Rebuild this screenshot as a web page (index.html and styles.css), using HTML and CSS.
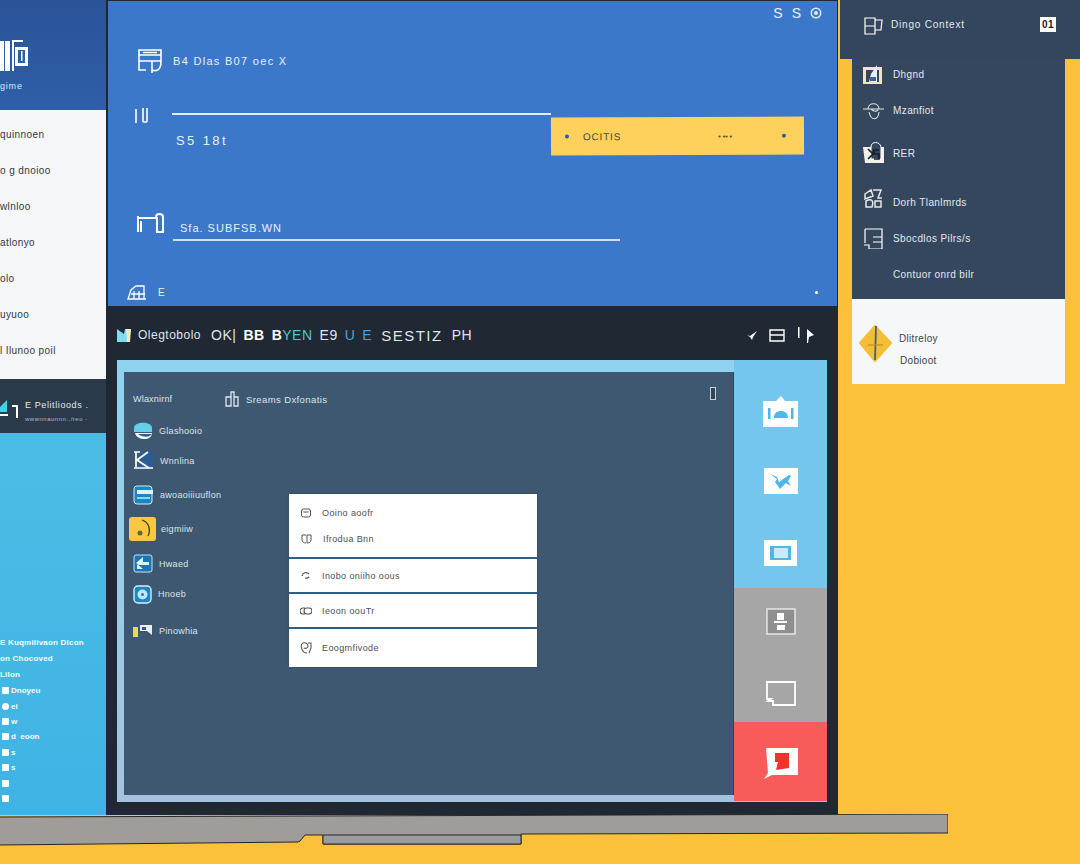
FILE: index.html
```html
<!DOCTYPE html>
<html lang="en">
<head>
    <meta charset="UTF-8">
    <title>Dashboard</title>
    <link rel="stylesheet" href="styles.css">
</head>
<body>

<div class="desk">

    <!-- left column, cut off by the window edge -->
    <aside class="left">
        <div class="left-brand">
            <svg class="brand-icon" width="28" height="32" viewBox="0 0 28 32">
                <rect x="0" y="1" width="10" height="30" fill="#fff"/>
                <rect x="4" y="1" width="1" height="30" fill="#2f5ea5"/>
                <path d="M12 0h11v2H14v29h-2z" fill="#fff"/>
                <rect x="15" y="7" width="13" height="19" fill="#fff"/>
                <rect x="18" y="10" width="7" height="13" fill="#2f5ea5"/>
                <rect x="21" y="11" width="1.500" height="10" fill="#fff"/>
            </svg>
            <div class="brand-name">gime</div>
        </div>
        <ul class="left-list">
            <li>quinnoen</li>
            <li>o g dnoioo</li>
            <li>wlnloo</li>
            <li>atlonyo</li>
            <li>olo</li>
            <li>uyuoo</li>
            <li>l Ilunoo poil</li>
        </ul>
        <div class="left-status">
            <svg width="18" height="19" viewBox="0 0 18 19">
                <path d="M0 8l7-7v12H0z" fill="#3fd0e6"/>
                <path d="M0 15h8v2H0zM12 6h6v13h-2V8h-4z" fill="#fff"/>
            </svg>
            <div>
                <div class="status-title">E Pelitlioods .</div>
                <div class="status-sub">wwwnnaunnn.,/reo -</div>
            </div>
        </div>
        <div class="left-cyan">
            <div class="cyan-line">E Kuqmilivaon Dlcon</div>
            <div class="cyan-line">on Chocoved</div>
            <div class="cyan-line">Lilon</div>
            <div class="cyan-item"><i></i>Dnoyeu</div>
            <div class="cyan-item"><i class="round"></i>ei</div>
            <div class="cyan-item"><i></i>w</div>
            <div class="cyan-item"><i></i>d &nbsp;eoon</div>
            <div class="cyan-item"><i></i>s</div>
            <div class="cyan-item"><i></i>s</div>
            <div class="cyan-item"><i></i></div>
            <div class="cyan-item"><i></i></div>
        </div>
    </aside>

    <main class="center">
        <section class="hero">
            <div class="hero-top">
                <span>S</span><span>S</span>
                <svg width="12" height="12" viewBox="0 0 14 14">
                    <circle cx="7" cy="7" r="5.500" fill="none" stroke="#dbeafa" stroke-width="1.800"/>
                    <circle cx="7" cy="7" r="2.400" fill="#dbeafa"/>
                </svg>
            </div>
            <div class="hero-row first">
                <svg width="25" height="26" viewBox="0 0 25 26" fill="none" stroke="#fff" stroke-width="1.600">
                    <path d="M1 2h22v11H1zM1 7h22M5 4.500h14M1 13v9h7M14 13v12M14 22c6 2 9-1 9-9"/>
                </svg>
                <span class="hero-title">B4 Dlas B07 oec X</span>
            </div>
            <div class="hero-row second">
                <svg class="icon-bars" width="14" height="17" viewBox="0 0 14 17" fill="none" stroke="#fff" stroke-width="1.600">
                    <path d="M1 2v14M8 1v14M12 1v14M8 15h4"/>
                </svg>
                <div class="hero-col">
                    <div class="hero-line"></div>
                    <div class="hero-sub">S5 18t</div>
                </div>
                <div class="yellow-bar">
                    <i></i><span class="yellow-label">OCITIS</span>
                    <span class="yellow-dots">• •• •</span><i></i>
                </div>
            </div>
            <div class="hero-row third">
                <svg width="28" height="20" viewBox="0 0 28 20" fill="none" stroke="#fff" stroke-width="2">
                    <path d="M2 19V3M5 19V8M2 5h19M20 4c0-4 7-4 7 0v15h-6V4"/>
                </svg>
                <div class="hero-field">
                    <div class="hero-field-text">Sfa. SUBFSB.WN</div>
                    <div class="hero-field-line"></div>
                </div>
            </div>
            <div class="hero-foot">
                <svg width="20" height="15" viewBox="0 0 20 15" fill="none" stroke="#fff" stroke-width="1.300">
                    <path d="M1 14L4 5 9 1h8v13zM1 14h18M7 6v8M12 6v8M4 9h14"/>
                </svg>
                <span>E</span>
                <i class="foot-dot"></i>
            </div>
        </section>

        <header class="bar">
            <svg width="14" height="15" viewBox="0 0 14 15">
                <path d="M0 1l7 5 1-5h6l-2 13H0z" fill="#7fdcf0"/>
                <path d="M9 1h5l-1 13h-3z" fill="#f1e9c4"/>
            </svg>
            <span class="bar-small">Olegtobolo</span>
            <div class="bar-big">
                <span>OK|</span>
                <span class="white">BB</span>
                <span><b class="white">B</b><span class="teal">YEN</span></span>
                <span>E9</span>
                <span class="blue">U</span>
                <span class="blue">E</span>
                <span class="wide-word">SESTIZ</span>
                <span>PH</span>
            </div>
            <div class="bar-tools">
                <svg width="10" height="10" viewBox="0 0 10 10"><path d="M0 5l3 1 7-5-4 6-1 3-2-3z" fill="#fff"/></svg>
                <svg width="16" height="13" viewBox="0 0 16 13" fill="none" stroke="#fff" stroke-width="1.400"><path d="M1 1h14v11H1zM1 6h14"/></svg>
                <svg width="18" height="16" viewBox="0 0 18 16"><path d="M1 0h1.500v11H1zM10 2l7 6-5 2-1 6h-1z" fill="#fff"/></svg>
            </div>
        </header>

        <section class="window">
            <div class="window-main">
                <div class="window-head">
                    <span class="head-left">Wlaxnirnf</span>
                    <svg width="14" height="16" viewBox="0 0 14 16" fill="none" stroke="#dfe7ee" stroke-width="1.300"><path d="M1 15V6h5v9zM6 15V1h3v14M9 15V6h4v9z"/></svg>
                    <span class="head-right">Sreams Dxfonatis</span>
                    <i class="head-mark"></i>
                </div>
                <ul class="side">
                    <li>
                        <svg width="20" height="18" viewBox="0 0 20 18"><path d="M1 6c0-7 18-7 18 0v4H1z" fill="#67cdea"/><path d="M2 11h17c0 8-15 8-17 0z" fill="#f2f7fb"/><path d="M5 12h14c-2 3-9 4-14 0z" fill="#2d5f9e"/></svg>
                        <span>Glashooio</span>
                    </li>
                    <li>
                        <svg width="21" height="20" viewBox="0 0 21 20"><rect x="6" y="1" width="14" height="17" fill="#2c5c96"/><path d="M1 1h6M3 1v15M1 17h19M4 9l11-8M4 9l12 8" fill="none" stroke="#fff" stroke-width="1.700"/></svg>
                        <span>Wnnlina</span>
                    </li>
                    <li>
                        <svg width="21" height="20" viewBox="0 0 21 20"><rect x="1" y="1" width="18" height="18" rx="3" fill="#1a86c6" stroke="#d5eef8"/><rect x="4" y="5" width="16" height="4" fill="#d9f3fb"/><rect x="4" y="12" width="13" height="2" fill="#8ed6ef"/></svg>
                        <span>awoaoiiiuuflon</span>
                    </li>
                    <li>
                        <svg class="active-icon" width="27" height="24" viewBox="0 0 27 24"><rect width="27" height="24" rx="3" fill="#fac83f"/><path d="M13 3c7 2 9 10 6 16" fill="none" stroke="#3a3a2c" stroke-width="1.300"/><circle cx="11" cy="16" r="2.500" fill="#5d6a3c"/></svg>
                        <span>eigmiiw</span>
                    </li>
                    <li>
                        <svg width="20" height="19" viewBox="0 0 20 19"><rect x="1" y="1" width="18" height="17" rx="2" fill="#1d74b5" stroke="#bfe6f5"/><path d="M3 9l7-6v5h6v3H4v4h6" fill="#d9f3fb"/></svg>
                        <span>Hwaed</span>
                    </li>
                    <li>
                        <svg width="19" height="19" viewBox="0 0 19 19"><rect x="1" y="1" width="17" height="17" rx="4" fill="#1a86c6" stroke="#d5eef8" stroke-width="1.400"/><circle cx="9.500" cy="9.500" r="5" fill="#bde7f6"/><circle cx="9.500" cy="9.500" r="1.500" fill="#2c7ab8"/></svg>
                        <span>Hnoeb</span>
                    </li>
                    <li>
                        <svg width="20" height="14" viewBox="0 0 20 14"><rect x="0" y="3" width="5" height="10" fill="#dfe53f"/><path d="M7 1h12v10l-5-4H7z" fill="#e3eef5"/><rect x="9" y="3" width="4" height="3" fill="#40586f"/></svg>
                        <span>Pinowhia</span>
                    </li>
                </ul>
                <div class="popup">
                    <div class="popup-group">
                        <div class="popup-row">
                            <svg width="12" height="12" viewBox="0 0 12 12" fill="none" stroke="#555" stroke-width="1"><rect x="1.500" y="2" width="9" height="8" rx="2"/><path d="M3.500 5h5"/></svg>
                            <span>Ooino aoofr</span>
                        </div>
                        <div class="popup-row">
                            <svg width="13" height="12" viewBox="0 0 13 12" fill="none" stroke="#555" stroke-width="1"><path d="M6 2H2v5c0 2 2 3 4 3M7 2h4v5c0 2-2 3-4 3z"/></svg>
                            <span>Ifrodua Bnn</span>
                        </div>
                    </div>
                    <div class="popup-row ruled">
                        <svg width="12" height="12" viewBox="0 0 12 12" fill="none" stroke="#555" stroke-width="1.200"><path d="M2 6a4 4 0 0 1 7-2M9 7a4 4 0 0 1-4 1"/></svg>
                        <span>Inobo oniiho oous</span>
                    </div>
                    <div class="popup-row ruled">
                        <svg width="12" height="12" viewBox="0 0 12 12" fill="none" stroke="#555" stroke-width="1.200"><path d="M5 3H3a2 2 0 0 0 0 6h2M7 3h2a2 2 0 0 1 0 6H7a2 2 0 0 1 0-6z"/></svg>
                        <span>Ieoon oouTr</span>
                    </div>
                    <div class="popup-row ruled last">
                        <svg width="12" height="14" viewBox="0 0 12 14" fill="none" stroke="#555" stroke-width="1.100"><path d="M7 12C1 12 0 3 3 2s5 1 5 3-2 3-4 2M8 2h3v5l-2 5"/></svg>
                        <span>Eoogmfivode</span>
                    </div>
                </div>
            </div>
            <div class="rail">
                <div class="rail-blue">
                    <svg width="35" height="31" viewBox="0 0 35 31"><path d="M0 5h13l5-5 4 5h13v26H0z" fill="#fff"/><path d="M5 12h2.500v11H5zM28 12h2.500v11H28zM11 22c0-5 3-7 7-7s7 2 7 7z" fill="#4fb7e8"/></svg>
                    <svg width="34" height="26" viewBox="0 0 34 26"><rect width="34" height="26" fill="#fff"/><path d="M6 6l7 3 2 5 10-7 2 1-3 5 3 5-5-3-6 6-5-7 2-3z" fill="#4fb7e8"/></svg>
                    <svg width="33" height="26" viewBox="0 0 33 26"><rect width="33" height="26" fill="#fff"/><path d="M6 6h21v14H6z" fill="#4fb7e8"/><rect x="10" y="8" width="14" height="10" fill="#c8eafa"/></svg>
                </div>
                <div class="rail-grey">
                    <svg width="30" height="27" viewBox="0 0 30 27"><rect x="1" y="1" width="28" height="25" fill="#8f8f8f" stroke="#e6e6e6" stroke-width="1.500"/><path d="M11 5h7v7h-7zM8 13h13v2H8zM11 17h8v5h-8z" fill="#fff"/></svg>
                    <svg width="31" height="25" viewBox="0 0 31 25" fill="none" stroke="#fff" stroke-width="1.800"><path d="M2 1h28v23H8v-4H3l3-2H2z"/></svg>
                </div>
                <div class="rail-red">
                    <svg width="35" height="32" viewBox="0 0 35 32"><path d="M3 1h32v27H9L1 32l4-6z" fill="#fff"/><path d="M12 6h14v15l-13 2 2-8h-3z" fill="#f2332b"/></svg>
                </div>
            </div>
        </section>
    </main>

    <aside class="right">
        <div class="right-head">
            <svg width="19" height="20" viewBox="0 0 19 20" fill="none" stroke="#fff" stroke-width="1.200"><path d="M1 3h10v16H1zM1 11h10M11 5h7l-1 10h-6"/></svg>
            <span>Dingo Context</span>
            <b class="badge">01</b>
        </div>
        <ul class="right-list">
            <li>
                <svg width="19" height="19" viewBox="0 0 19 19"><rect y="2" width="19" height="17" fill="#f1e3c4"/><rect x="3" y="5" width="13" height="12" fill="#33465e"/><path d="M8 9l6-9v17H6z" fill="#e8eef8"/><path d="M7 12h6v4H7z" fill="#3e5fa8"/></svg>
                <span>Dhgnd</span>
            </li>
            <li>
                <svg width="22" height="18" viewBox="0 0 22 18" fill="none" stroke="#e5e5e5" stroke-width="1.100"><path d="M0 7h21M5 7c0-7 11-7 11 0M6 10c2 9 9 9 10 0M8 7c3 3 5 3 7 1"/></svg>
                <span>Mzanfiot</span>
            </li>
            <li>
                <svg width="22" height="23" viewBox="0 0 22 23"><path d="M0 5h21v16H2z" fill="#f3f0ec"/><path d="M8 5c0-6 9-6 10 0v12H8z" fill="#33465e" stroke="#fff"/><path d="M5 7l5 5-5 5M16 8h-5v4h5v5h-5" fill="none" stroke="#15202c" stroke-width="1.700"/></svg>
                <span>RER</span>
            </li>
            <li class="low-text">
                <svg width="20" height="21" viewBox="0 0 20 21" fill="none" stroke="#e8e8e8" stroke-width="1.500"><path d="M2 6l6-4 2 6-8 3zM10 2h8l-3 8h4M3 13c6-3 8 0 6 6H3zM12 13h6v6h-6z"/></svg>
                <span>Dorh Tlanlmrds</span>
            </li>
            <li>
                <svg width="20" height="21" viewBox="0 0 20 21" fill="none" stroke="#fff" stroke-width="1.200"><path d="M2 1h17v20H6v-4H1M2 1v14M10 9h9M10 14h9"/></svg>
                <span>Sbocdlos Pilrs/s</span>
            </li>
            <li>
                <i></i>
                <span>Contuor onrd bilr</span>
            </li>
        </ul>
        <div class="right-card">
            <svg width="33" height="37" viewBox="0 0 33 37"><path d="M16 1l16 17-16 18L1 18z" fill="#f6bd36" stroke="#f6bd36" stroke-linejoin="round" stroke-width="2"/><path d="M17 1l-1 34" stroke="#3f5f8f" stroke-width="1.800"/><path d="M9 20h15" stroke="#c08b25" stroke-width="1.200"/></svg>
            <div class="card-text">
                <div>Dlitreloy</div>
                <div class="card-second">Dobioot</div>
            </div>
        </div>
    </aside>
</div>

<svg class="base" width="948" height="50" viewBox="0 0 948 50">
    <path d="M-2 3L948 0V19L521 20V30H323V21H305L300 27L298 28L-2 31z" fill="#a09c9a" stroke="#23262a" stroke-width="1"/>
    <path d="M323 21H521V30H323z" fill="#9a9ca0" stroke="#23262a" stroke-width="1"/>
</svg>

</body>
</html>
```

FILE: styles.css
```css
* {
    box-sizing: border-box;
}
html, body {
    margin: 0;
    height: 864px;
    overflow: hidden;
}
body {
    background-color: #fbc13a;
    font-family: "Liberation Sans", Arial, sans-serif;
    font-size: 10px;
}
ul {
    list-style: none;
    margin: 0;
    padding: 0;
}
svg {
    display: block;
    flex: none;
}

.desk {
    display: flex;
    align-items: flex-start;
    height: 815px;
}

/* left column */
.left {
    width: 106px;
    height: 815px;
    background-color: #1f2a36;
    overflow: hidden;
    flex: none;
}
.left-brand {
    height: 110px;
    padding-top: 40px;
    background: linear-gradient(#2a5397, #2f5fa8);
    color: #dfe8f5;
}
.brand-name {
    margin-top: 9px;
    font-size: 9px;
    letter-spacing: 0.8px;
}
.left-list {
    height: 269px;
    padding: 16px 0 0 0;
    background-color: #f6f7f8;
    color: #33383f;
}
.left-list li {
    height: 36px;
    line-height: 18px;
    letter-spacing: 0.4px;
    white-space: nowrap;
}
.left-status {
    display: flex;
    gap: 7px;
    height: 54px;
    padding: 20px 0 0 0;
    background-color: #2b3a4b;
    color: #e0e8ef;
    font-size: 9px;
    white-space: nowrap;
}
.status-title {
    letter-spacing: 0.6px;
    margin-top: 1px;
}
.status-sub {
    margin-top: 6px;
    font-size: 6px;
    letter-spacing: 0.5px;
    color: #aebccb;
}
.left-cyan {
    height: 382px;
    padding-top: 202px;
    background: linear-gradient(#4bbde5, #3fb3e4);
    color: #f4fbff;
    font-size: 8px;
    font-weight: bold;
    white-space: nowrap;
}
.cyan-line {
    height: 16px;
    line-height: 16px;
    letter-spacing: 0.2px;
}
.cyan-item {
    display: flex;
    align-items: center;
    gap: 2px;
    height: 15.400px;
    padding-left: 2px;
}
.cyan-item i {
    width: 7px;
    height: 7px;
    border-radius: 1px;
    background-color: #fff;
}
.cyan-item i.round {
    border-radius: 50%;
}

/* center */
.center {
    width: 732px;
    height: 815px;
    background-color: #1f2833;
    flex: none;
    padding: 1px 1px 0 2px;
}
.hero {
    height: 305px;
    background-color: #3b78c9;
    color: #e8f1fb;
    overflow: hidden;
}
.hero-top {
    display: flex;
    justify-content: flex-end;
    align-items: center;
    gap: 9px;
    height: 14px;
    margin-top: 5px;
    padding-right: 15px;
    font-size: 14px;
}
.hero-row {
    display: flex;
    padding-left: 30px;
}
.hero-row.first {
    align-items: center;
    gap: 10px;
    margin-top: 28px;
    height: 26px;
}
.hero-title {
    font-size: 11px;
    letter-spacing: 1.300px;
}
.hero-row.second {
    margin-top: 33px;
    padding-left: 27px;
}
.icon-bars {
    margin-right: 23px;
}
.hero-col {
    width: 379px;
}
.hero-line {
    margin-top: 6px;
    height: 2px;
    background-color: #e4eefa;
}
.hero-sub {
    margin: 18px 0 0 4px;
    font-size: 13px;
    letter-spacing: 2.400px;
}
.yellow-bar {
    display: flex;
    align-items: center;
    width: 253px;
    height: 38px;
    margin-top: 10px;
    padding: 0 18px 0 14px;
    background-color: #fdd15b;
    color: #4c4a38;
    transform: rotate(-0.2deg);
}
.yellow-bar i {
    width: 4px;
    height: 4px;
    border-radius: 50%;
    background-color: #2a5da0;
}
.yellow-label {
    margin-left: 14px;
    letter-spacing: 0.8px;
}
.yellow-dots {
    margin-left: auto;
    margin-right: 50px;
    font-size: 7px;
    font-weight: bold;
}
.hero-row.third {
    margin-top: 58px;
    padding-left: 28px;
    height: 30px;
}
.hero-field {
    margin-left: 9px;
    width: 447px;
}
.hero-field-text {
    margin: 8px 0 0 7px;
    height: 14px;
    line-height: 14px;
    font-size: 11px;
    letter-spacing: 1px;
}
.hero-field-line {
    margin-top: 4px;
    height: 2px;
    background-color: #d4e1f3;
}
.hero-foot {
    display: flex;
    align-items: center;
    gap: 11px;
    margin-top: 42px;
    padding: 0 19px;
}
.foot-dot {
    width: 3px;
    height: 3px;
    margin-left: auto;
    border-radius: 50%;
    background-color: #fff;
}

.bar {
    display: flex;
    align-items: center;
    height: 54px;
    padding: 4px 22px 0 9px;
    color: #dfe5ea;
}
.bar-small {
    margin-left: 7px;
    font-size: 12px;
    letter-spacing: 0.5px;
}
.bar-big {
    display: flex;
    gap: 7px;
    margin-left: 10px;
    font-size: 14px;
    letter-spacing: 0.500px;
    white-space: nowrap;
}
.wide-word {
    margin: 0 2px;
    font-size: 15px;
    letter-spacing: 1.500px;
}
.white {
    color: #fff;
    font-weight: bold;
}
.teal {
    color: #57c2c9;
}
.blue {
    color: #4f9fdc;
}
.bar-tools {
    display: flex;
    align-items: center;
    gap: 12px;
    margin-left: auto;
}

.window {
    display: flex;
    width: 710px;
    height: 442px;
    margin-left: 9px;
    padding: 12px 0 0 7px;
    background: linear-gradient(#8fd3f1, #a5c3e0);
}
.window-main {
    position: relative;
    width: 610px;
    height: 423px;
    background-color: #3f5871;
    border-right: 1px solid #2f4458;
    color: #dce4eb;
}
.window-head {
    display: flex;
    align-items: center;
    height: 38px;
    padding: 16px 0 0 9px;
}
.head-left {
    width: 92px;
    font-size: 9px;
    letter-spacing: 0.2px;
}
.head-right {
    margin-left: 7px;
    font-size: 9.500px;
    letter-spacing: 0.4px;
}
.head-mark {
    position: absolute;
    top: 15px;
    left: 586px;
    width: 6px;
    height: 13px;
    border: 1px solid #c5d0da;
    background-color: #2f4458;
}
.side {
    margin-top: 4px;
    padding-left: 9px;
}
.side li {
    display: flex;
    align-items: center;
    gap: 6px;
    height: 33.500px;
    font-size: 9px;
    letter-spacing: 0.3px;
}
.side li:nth-child(2) {
    margin-top: -3px;
}
.side li:nth-child(3) {
    margin-bottom: 1px;
}
.side li:nth-child(5) {
    margin-top: 1px;
}
.side li:nth-child(6) {
    margin-top: -3px;
    margin-bottom: 3px;
}
.active-icon {
    margin: 0 -1px 0 -4px;
}
.popup {
    position: absolute;
    top: 122px;
    left: 165px;
    width: 248px;
    height: 173px;
    background-color: #fff;
    color: #4a4f55;
    font-size: 9px;
    letter-spacing: 0.4px;
    box-shadow: 0 0 2px rgba(20, 40, 60, 0.4);
}
.popup-group {
    height: 63px;
    padding-top: 6px;
}
.popup-group .popup-row {
    height: 26px;
}
.popup-row {
    display: flex;
    align-items: center;
    gap: 10px;
    height: 35px;
    padding-left: 11px;
}
.popup-row.ruled {
    border-top: 2px solid #2d5f86;
}
.popup-row.last {
    height: 40px;
}

.rail {
    width: 93px;
    display: flex;
    flex-direction: column;
    margin-top: -12px;
}
.rail-blue, .rail-grey, .rail-red {
    display: flex;
    flex-direction: column;
    align-items: center;
}
.rail-blue {
    height: 228px;
    padding-top: 36px;
    gap: 41px;
    background-color: #74c6ef;
}
.rail-blue svg:nth-child(3) {
    margin-top: 5px;
}
.rail-grey {
    height: 134px;
    gap: 46px;
    padding-top: 20px;
    background-color: #a6a6a6;
}
.rail-red {
    height: 79px;
    padding-top: 25px;
    background-color: #f95b5b;
}

/* right panel */
.right {
    width: 240px;
    margin-left: 2px;
    flex: none;
    color: #e3e7ec;
}
.right-head {
    display: flex;
    align-items: center;
    gap: 8px;
    height: 59px;
    padding: 0 24px 10px 24px;
    background-color: #33465e;
}
.right-head span {
    font-size: 10px;
    letter-spacing: 0.8px;
}
.badge {
    margin-left: auto;
    width: 16px;
    height: 15px;
    background-color: #fff;
    color: #1c222a;
    font-size: 10px;
    line-height: 15px;
    text-align: center;
    letter-spacing: 0.5px;
}
.right-list {
    margin: 0 15px 0 12px;
    height: 240px;
    background-color: #35475f;
}
.right-list li {
    display: grid;
    grid-template-columns: 30px 1fr;
    align-items: center;
    padding-left: 11px;
    font-size: 10px;
    letter-spacing: 0.4px;
    white-space: nowrap;
}
.right-list li:nth-child(1) { height: 31px; }
.right-list li:nth-child(2) { height: 41px; }
.right-list li:nth-child(3) { height: 44px; }
.right-list li:nth-child(4) { height: 46px; }
.right-list li:nth-child(5) { height: 35px; }
.right-list li:nth-child(6) { height: 36px; }
.right-list li.low-text span {
    margin-top: 8px;
}
.right-card {
    display: flex;
    align-items: center;
    gap: 7px;
    margin: 0 15px 0 12px;
    height: 85px;
    padding: 4px 0 0 7px;
    background-color: #f6f7f8;
    color: #3c434c;
    font-size: 10px;
    letter-spacing: 0.3px;
}
.card-text {
    margin-top: 11px;
}
.card-second {
    margin: 11px 0 0 1px;
}

.base {
    margin-top: -1px;
}
```
